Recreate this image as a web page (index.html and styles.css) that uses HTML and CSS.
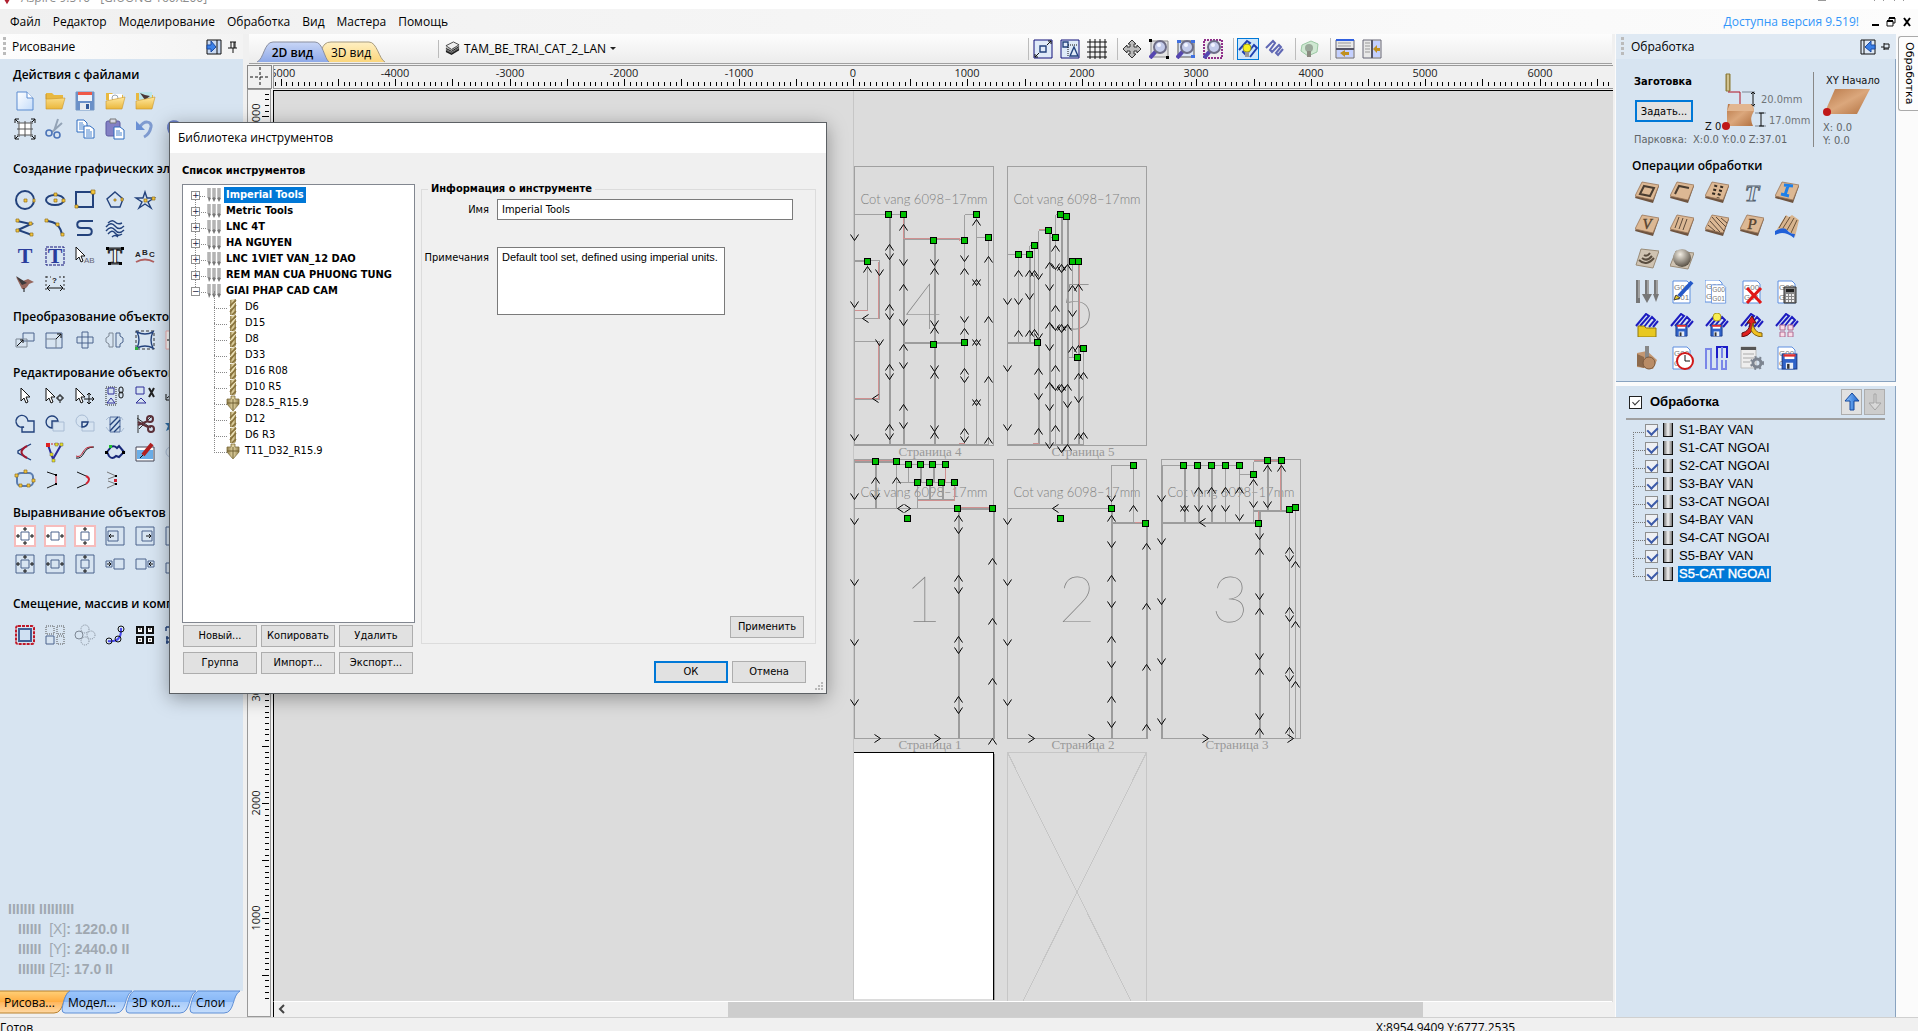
FILE: index.html
```html
<!DOCTYPE html>
<html lang="ru">
<head>
<meta charset="utf-8">
<title>Aspire 9.510 - [GIUONG 160X200]</title>
<link rel="stylesheet" href="styles.css">
</head>
<body>
<svg class="defs" aria-hidden="true">
  <defs>
    <linearGradient id="gOrange" x2="0" y2="1"><stop offset="0" stop-color="#ffd078"/><stop offset=".5" stop-color="#ffac40"/><stop offset=".5" stop-color="#ffb65c"/><stop offset="1" stop-color="#ffd9a4"/></linearGradient>
    <linearGradient id="gBlue" x2="0" y2="1"><stop offset="0" stop-color="#9cc6fb"/><stop offset=".5" stop-color="#86b6f6"/><stop offset=".5" stop-color="#a9ccfa"/><stop offset="1" stop-color="#c6defc"/></linearGradient>
    <linearGradient id="gTab2d" x2="0" y2="1"><stop offset="0" stop-color="#c9d6f6"/><stop offset="1" stop-color="#8ea9e8"/></linearGradient>
    <linearGradient id="gTab3d" x2="0" y2="1"><stop offset="0" stop-color="#fff0c4"/><stop offset="1" stop-color="#fbd67c"/></linearGradient>
    <linearGradient id="gWood" x2="1" y2="1"><stop offset="0" stop-color="#b87848"/><stop offset=".5" stop-color="#dba77c"/><stop offset="1" stop-color="#b06f3e"/></linearGradient>
    <linearGradient id="gFolder" x2="0" y2="1"><stop offset="0" stop-color="#ffe9a0"/><stop offset="1" stop-color="#eab73c"/></linearGradient>
    <linearGradient id="gPaper" x2="1" y2="1"><stop offset="0" stop-color="#fff"/><stop offset="1" stop-color="#c4dcfa"/></linearGradient>
    <linearGradient id="gArrow" x2="1"><stop offset="0" stop-color="#8ec5ff"/><stop offset="1" stop-color="#1c64cc"/></linearGradient>
    <linearGradient id="gBit" x2="1"><stop offset="0" stop-color="#8f7c48"/><stop offset=".5" stop-color="#e6d9a8"/><stop offset="1" stop-color="#8f7c48"/></linearGradient>
    <radialGradient id="gBall" cx=".4" cy=".3" r=".7"><stop offset="0" stop-color="#f3eee4"/><stop offset="1" stop-color="#5a5246"/></radialGradient>
    <symbol id="tile" viewBox="0 0 24 24"><path d="M7 2 24 5 18 22 0 17Z" fill="#6e5440"/><path d="M7 1 24 4 18 19 0 15Z" fill="#dcb894" stroke="#9a7658" stroke-width=".8"/></symbol>
    <symbol id="gcode" viewBox="0 0 24 24"><path d="M3 1H17L20 4V23H3Z" fill="#fff" stroke="#5f8fe0"/><text x="4" y="10" class="g-text">G00</text><text x="4" y="20" class="g-text">G01</text></symbol>
    <symbol id="zig" viewBox="0 0 24 24"><path d="M1 13 11 1 14 3 5 13M9 14 17 4 20 7 14 14M18 14 23 8" fill="none" stroke="#1c1cc0" stroke-width="2"/></symbol>
    <symbol id="disk" viewBox="0 0 14 14"><path d="M1 1H13V13H1Z" fill="#2f62c8" stroke="#1c3f90"/><path d="M3 1H11V5H3Z" fill="#fff"/><path d="M2 1H12V3H2Z" fill="#e03030"/><path d="M4 8H10V13H4Z" fill="#e8eef8"/><path d="M5 9H7V13H5Z" fill="#333"/></symbol>
    <symbol id="cursor" viewBox="0 0 20 20"><path d="M6 2V15L9 12 11 17 13 16 11 11H15Z" fill="#fff" stroke="#111"/></symbol>
    <symbol id="lens" viewBox="0 0 20 20"><path d="M1 19 8 11" stroke="#5546b0" stroke-width="4"/><circle cx="11" cy="8" r="6" fill="#c3cbea" stroke="#6d6d86" stroke-width="2"/><circle cx="10" cy="6" r="2" fill="#f2f5ff"/></symbol>
    <symbol id="set" viewBox="0 0 14 16"><path d="M2 1V11M7 1V11M12 1V11" stroke="#8c8c8c" stroke-width="3"/><path d="M2 1V10M7 1V10M12 1V10" stroke="#dcdcdc"/><path d="M1 11H4L2 15ZM5 11H9L7 15ZM10 11H14L12 15Z" fill="#777"/></symbol>
    <symbol id="bit" viewBox="0 0 14 16"><path d="M4 1 10 0V14L9 16H4Z" fill="url(#gBit)"/><path d="M4 7 10 1M4 13 10 6M6 16 10 12" stroke="#86703a" stroke-width="1.6"/><path d="M4 10 10 3" stroke="#f4ecc8"/></symbol>
    <symbol id="cone" viewBox="0 0 14 16"><path d="M5 1H9V4H13V9L7 16 1 9V4H5Z" fill="url(#gBit)" stroke="#80703c" stroke-width=".8"/><path d="M1 8H13M7 4V15" stroke="#6e5f30"/></symbol>
  </defs>
</svg>

<header class="titlebar"><svg viewBox="0 0 8 6" class="logo"><path d="M1 0 4 5 7 0" fill="#b02030"/></svg><span>Aspire 9.510 - [GIUONG 160X200]</span><i></i><b></b><b></b></header>
<nav class="menubar">
  <a href="#">Файл</a><a href="#">Редактор</a><a href="#">Моделирование</a><a href="#">Обработка</a><a href="#">Вид</a><a href="#">Мастера</a><a href="#">Помощь</a>
  <a href="#" class="update">Доступна версия 9.519!</a>
  <button aria-label="Свернуть"><svg viewBox="0 0 10 10"><path d="M2 8H9" stroke="#000" stroke-width="2"/></svg></button>
  <button aria-label="Восстановить"><svg viewBox="0 0 10 10"><path d="M3 3V1H9V6H7M1 4H7V9H1Z" class="k"/><path d="M3 1H9M1 4H7" stroke="#000" stroke-width="2"/></svg></button>
  <button aria-label="Закрыть"><svg viewBox="0 0 10 10"><path d="M2 1 8 9M8 1 2 9" stroke="#000" stroke-width="2"/></svg></button>
</nav>

<main class="workspace">
<aside class="left">
  <div class="panel-head"><span class="grip"></span><h2>Рисование</h2>
    <button aria-label="Переключить панели"><svg viewBox="0 0 16 16"><path d="M1 1H15V15H1Z" fill="#c9d9f2" stroke="#111"/><path d="M11 1V15" class="k"/><path d="M1 6H5V2L10 8 5 13V10H1Z" fill="#3a80e8" stroke="#1c4aa0"/></svg></button>
    <button aria-label="Закрепить"><svg viewBox="0 0 16 16"><path d="M5 3H11M6 3V9M10 3V9M9 3V9M3 9H12M8 9V14" class="k"/></svg></button></div>
  <div class="panel-body">
    <section class="tools tools--wide"><h3>Действия с файлами</h3><div class="tool-grid">
      <button aria-label="Новый"><svg viewBox="0 0 20 20"><path d="M2 1H12L18 7V19H2Z" fill="url(#gPaper)" stroke="#5b8bd0"/><path d="M12 1V7H18" fill="#fff" stroke="#5b8bd0"/></svg></button>
      <button aria-label="Открыть"><svg viewBox="0 0 20 20"><path d="M1 2H7L9 4H18V9H1Z" fill="#e8b840"/><path d="M1 18V3L1 8H3L20 7 17 18Z" fill="url(#gFolder)" stroke="#c9962a" stroke-width=".6"/></svg></button>
      <button aria-label="Сохранить"><svg viewBox="0 0 20 20"><path d="M1 1H19V19H1Z" fill="#6a90c8" stroke="#7395c4"/><path d="M3 1H17V10H3Z" fill="#edf2f8"/><path d="M3 1H17V4H3Z" fill="#ef5948"/><path d="M5 12H15V19H5Z" fill="#e6ebf0"/><path d="M11 13H14V18H11Z" fill="#345a98"/></svg></button>
      <button aria-label="Импорт векторов"><svg viewBox="0 0 20 20"><path d="M1 2H7L9 4H18V9H1Z" fill="#e8b840"/><path d="M4 3H17V10H4Z" fill="#fff"/><circle cx="10" cy="7" r="3" fill="none" stroke="#9aa6b4"/><path d="M1 18V10L20 6 17 18Z" fill="url(#gFolder)" stroke="#c9962a" stroke-width=".6"/></svg></button>
      <button aria-label="Импорт рисунка"><svg viewBox="0 0 20 20"><path d="M1 2H7L9 4H18V9H1Z" fill="#e8b840"/><path d="M4 1H17V9H4Z" fill="#bce5ea"/><path d="M5 2 10 4 15 5 10 9Z" fill="#4a3836"/><path d="M1 18V10L20 6 17 18Z" fill="url(#gFolder)" stroke="#c9962a" stroke-width=".6"/></svg></button>
      <span></span>
      <button aria-label="Размер задания"><svg viewBox="0 0 20 20"><path d="M4 4H16V16H4Z" fill="#fff"/><path d="M4 2V18M10 2V18M16 2V18M2 4H18M2 10H18M2 16H18" stroke="#555"/><path d="M0 4V0H4M16 0H20V4M20 16V20H16M4 20H0V16" stroke="#111" fill="none"/><path d="M0 0 3 3M20 0 17 3M20 20 17 17M0 20 3 17" class="k"/></svg></button>
      <button aria-label="Вырезать"><svg viewBox="0 0 20 20"><path d="M13 0 9 12M17 4 7 13" stroke="#93a3b6" stroke-width="2"/><circle cx="4" cy="14" r="3" class="cut"/><circle cx="12" cy="16" r="3" class="cut"/></svg></button>
      <button aria-label="Копировать"><svg viewBox="0 0 20 20"><path d="M2 1H9L12 4V13H2Z" fill="#fff" stroke="#2f6cc0"/><path d="M4 4H8M4 6H9M4 8H9M4 10H9" stroke="#4a86d0"/><path d="M9 7H15L19 10V19H9Z" fill="#fff" stroke="#2f6cc0"/><path d="M11 11H15M11 13H17M11 15H17M11 17H17" stroke="#4a86d0"/></svg></button>
      <button aria-label="Вставить"><svg viewBox="0 0 20 20"><rect x="1" y="2" width="14" height="15" rx="2" fill="#8380c4" stroke="#5d5aa0"/><path d="M5 0H11V4H5Z" fill="#d8d8e4" stroke="#777"/><path d="M9 8H15L19 11V20H9Z" fill="#fff" stroke="#2f6cc0"/><path d="M11 12H15M11 14H17M11 16H17" stroke="#4a86d0"/></svg></button>
      <button aria-label="Отменить"><svg viewBox="0 0 20 20"><path d="M5 8C9 1 17 2 16 8 15 13 13 16 9 18" fill="none" stroke="#7f9bd0" stroke-width="3"/><path d="M1 2V11H10Z" fill="#6a90d4"/></svg></button>
      <button aria-label="Вернуть"><svg viewBox="0 0 20 20"><path d="M16 8C12 1 3 2 4 9 5 14 7 16 11 18" fill="none" stroke="#6a7fc6" stroke-width="4"/><path d="M19 3V12H10Z" fill="#6a90d4"/></svg></button>
    </div></section>

    <section class="tools tools--wide"><h3>Создание графических элементов</h3><div class="tool-grid">
      <button aria-label="Окружность"><svg viewBox="0 0 20 20"><circle cx="10" cy="10" r="9" class="b"/><path d="M9 9H12V12H9ZM18 9H20V12H18Z" class="y"/></svg></button>
      <button aria-label="Эллипс"><svg viewBox="0 0 20 20"><ellipse cx="10" cy="10" rx="9" ry="5" class="b"/><path d="M9 9H12V12H9ZM17 9H20V12H17ZM9 3H12V6H9Z" class="y"/></svg></button>
      <button aria-label="Прямоугольник"><svg viewBox="0 0 20 20"><path d="M1 2H18V17H1Z" class="b"/><path d="M16 0H20V4H16ZM0 15H3V18H0Z" class="y"/></svg></button>
      <button aria-label="Многоугольник"><svg viewBox="0 0 20 20"><path d="M10 2 18 9 15 17H6L2 9Z" class="b b1"/><path d="M9 9H11V11H9ZM16 8H18V11H16Z" class="y"/></svg></button>
      <button aria-label="Звезда"><svg viewBox="0 0 20 20"><path d="M10 2 12 8H19L13 12 16 18 10 14 4 18 7 12 1 8H8Z" class="b b1"/><path d="M9 9H12V12H9ZM17 7H20V10H17Z" class="y"/></svg></button>
      <span></span>
      <button aria-label="Ломаная"><svg viewBox="0 0 20 20"><path d="M2 3 16 6 3 12 17 17" class="b"/><path d="M1 1H4V4H1ZM14 4H17V7H14ZM1 11H4V14H1ZM15 15H18V18H15Z" class="y"/></svg></button>
      <button aria-label="Дуга"><svg viewBox="0 0 20 20"><path d="M2 3Q15 4 17 17" class="b"/><path d="M0 1H3V4H0ZM11 5H14V8H11ZM16 15H19V18H16Z" class="y"/></svg></button>
      <button aria-label="Кривая"><svg viewBox="0 0 20 20"><path d="M18 3H6C1 3 1 10 6 10H13C18 10 18 17 13 17H2" class="b"/></svg></button>
      <button aria-label="Текстура"><svg viewBox="0 0 20 20"><circle cx="10" cy="10" r="9" fill="#dbe7f3"/><path d="M3 5Q7 1 10 4T17 5M1 9Q6 3 10 8T19 8M1 13Q6 7 10 12T19 12M3 16Q7 11 10 15T17 16M7 19Q10 16 13 19" class="b b1"/></svg></button>
      <span></span><span></span>
      <button aria-label="Текст"><svg viewBox="0 0 20 20"><text x="10" y="17" class="serif t-blue">T</text></svg></button>
      <button aria-label="Текст в рамке"><svg viewBox="0 0 20 20"><path d="M1 1H19V19H1Z" fill="none" stroke="#15157a" stroke-dasharray="3 1"/><text x="10" y="17" class="serif t-blue">T</text></svg></button>
      <button aria-label="Выбор текста"><svg viewBox="0 0 20 20"><use href="#cursor" x="-5" y="-1"/><text x="9" y="17" class="tiny">AB</text></svg></button>
      <button aria-label="Преобразовать текст"><svg viewBox="0 0 20 20"><text x="10" y="17" class="serif t-out">T</text><path d="M1 1H4V4H1ZM16 1H19V4H16ZM3 16H6V19H3ZM14 16H17V19H14Z"/><path d="M4 2H16M4 18H16" class="k"/></svg></button>
      <button aria-label="Текст по кривой"><svg viewBox="0 0 20 20"><text x="0" y="11" class="tiny t-dark">A</text><text x="7" y="9" class="tiny t-dark">B</text><text x="14" y="11" class="tiny t-dark">C</text><path d="M1 16Q10 11 19 16" fill="none" stroke="#b06060" stroke-width="2"/></svg></button>
      <span></span>
      <button aria-label="Трассировка"><svg viewBox="0 0 20 20"><path d="M1 3 8 7 13 5 19 8 14 10Q11 16 7 15Z" fill="#96675e"/><path d="M1 2 7 11 12 9Z" fill="#3d3a3c"/><path d="M9 14V18" class="k"/></svg></button>
      <button aria-label="Размеры"><svg viewBox="0 0 20 20"><path d="M1 2V18M19 2V18M1 3H6M14 3H19" stroke="#333" stroke-dasharray="2 2"/><path d="M2 14H18M5 11 2 14 5 17M15 11 18 14 15 17" class="k"/><text x="7" y="9" class="tiny t-dark">?</text></svg></button>
    </div></section>

    <section class="tools"><h3>Преобразование объектов</h3><div class="tool-grid">
      <button aria-label="Переместить"><svg viewBox="0 0 20 20"><path d="M8 3H19V11H8Z" class="s"/><path d="M1 9H12V17H1Z" class="g"/><path d="M2 16 8 10M5 10H8V13" class="k"/></svg></button>
      <button aria-label="Масштаб"><svg viewBox="0 0 20 20"><path d="M1 3H17V18H1Z" class="s"/><path d="M1 9H11V18" class="g"/><path d="M11 9 16 4M12 4H16V8" class="k"/></svg></button>
      <button aria-label="Повернуть"><svg viewBox="0 0 20 20"><path d="M7 2H13V18H7Z" class="s"/><path d="M2 7H18V13H2Z" class="s"/></svg></button>
      <button aria-label="Отразить"><svg viewBox="0 0 20 20"><path d="M8 3H4V6L1 8V12L4 14V17H8Z" class="g"/><path d="M11 3H15V6L18 8V12L15 14V17H11Z" class="s"/></svg></button>
      <button aria-label="Исказить"><svg viewBox="0 0 20 20"><path d="M1 1H19V19H1Z" fill="none" stroke="#333" stroke-dasharray="3 2"/><path d="M2 2Q10 6 18 2 14 10 18 18 10 14 2 18 6 10 2 2Z" class="b b1"/><path d="M0 17H3V20H0Z" fill="#30b040"/></svg></button>
      <button aria-label="Выровнять"><svg viewBox="0 0 20 20"><path d="M1 1H19V19H1Z" fill="#fff" stroke="#f0b0b0"/><path d="M2 10H8M5 7V13" class="k"/></svg></button>
    </div></section>

    <section class="tools"><h3>Редактирование объектов</h3><div class="tool-grid">
      <button aria-label="Выбор"><svg viewBox="0 0 20 20"><use href="#cursor"/></svg></button>
      <button aria-label="Узлы"><svg viewBox="0 0 20 20"><use href="#cursor" x="-5"/><path d="M13 10H17V14H13ZM15 8V10M15 14V17M11 12H13M17 12H19" class="k"/></svg></button>
      <button aria-label="Трансформация"><svg viewBox="0 0 20 20"><use href="#cursor" x="-5"/><path d="M14 7V18M9 13H19M12 9 14 7 16 9M12 16 14 18 16 16M17 11 19 13 17 15" class="k"/></svg></button>
      <button aria-label="Группировать"><svg viewBox="0 0 20 20"><path d="M1 1H11V19H1Z" fill="none" stroke="#222" stroke-dasharray="1 1"/><path d="M3 2H9V8H3ZM6 12 10 17H2Z" class="v"/><rect x="14" y="1" width="4" height="6" rx="2" class="k"/><rect x="14" y="6" width="4" height="6" rx="2" class="k"/></svg></button>
      <button aria-label="Разгруппировать"><svg viewBox="0 0 20 20"><path d="M1 1H9V8H1ZM6 12 11 17H1Z" class="v"/><path d="M14 2 19 11M19 2 14 11" stroke="#222" stroke-width="2"/></svg></button>
      <button aria-label="Измерить"><svg viewBox="0 0 20 20"><path d="M2 12 12 4M1 8V14H7" class="k"/></svg></button>
      <button aria-label="Сварить"><svg viewBox="0 0 20 20"><path d="M9 13A6 6 0 1 1 13 7H19V18H7V13Z" class="b b1"/></svg></button>
      <button aria-label="Вычесть"><svg viewBox="0 0 20 20"><path d="M8 8H19V17H8Z" class="f"/><path d="M7 14A6 6 0 1 1 13 7H7Z" class="b b1"/></svg></button>
      <button aria-label="Пересечь"><svg viewBox="0 0 20 20"><path d="M7 8H19V17H7Z" class="f"/><circle cx="7" cy="7" r="6" class="f"/><path d="M7 8H13Q12 13 7 13Z" class="b b1"/></svg></button>
      <button aria-label="Штриховка"><svg viewBox="0 0 20 20"><path d="M5 3H15V18H5Z" fill="#cbdced" stroke="#5873a0"/><path d="M5 11 13 3M5 17 15 6M9 18 15 12" class="b b1"/><path d="M1 6 4 3M16 18 19 14M1 13 4 17M16 3 18 6" class="f"/></svg></button>
      <button aria-label="Обрезать"><svg viewBox="0 0 20 20"><path d="M3 1V19M2 4 16 14M16 3 4 15" stroke="#333"/><circle cx="15" cy="5" r="3" class="br"/><circle cx="16" cy="15" r="3" class="br"/><path d="M13 7 3 11M13 13 3 8" class="br"/></svg></button>
      <button aria-label="Звёздочка"><svg viewBox="0 0 20 20"><path d="M6 7 8 11H12L8 14 10 18 5 15 1 17 3 12 0 9H4Z" fill="#2f6fa8"/></svg></button>
      <button aria-label="Скругление"><svg viewBox="0 0 20 20"><path d="M16 2 3 9V11L16 18" class="b b1"/><path d="M12 4Q1 10 12 16" fill="none" stroke="#a01830" stroke-width="2"/></svg></button>
      <button aria-label="Подгонка"><svg viewBox="0 0 20 20"><path d="M3 2H15" stroke="#d02020" stroke-dasharray="2 1"/><path d="M3 3 8 17 16 3" class="v v2"/><path d="M1 1H5V5H1Z" fill="#e02020"/><path d="M10 1H13V4H10ZM15 1H18V4H15ZM5 11H8V14H5ZM7 17H10V20H7Z" fill="#e8e020" stroke="#665" stroke-width=".5"/></svg></button>
      <button aria-label="Сгладить"><svg viewBox="0 0 20 20"><path d="M1 16Q6 17 9 11T19 5" class="k"/><path d="M1 14Q5 16 8 10T18 5" stroke="#c02030" fill="none"/></svg></button>
      <button aria-label="Редактор контура"><svg viewBox="0 0 20 20"><path d="M2 10 6 5Q9 3 12 6L14 4 19 10 14 15 11 14Q7 18 4 14Z" fill="none" stroke="#182878" stroke-width="2"/><path d="M4 3H7V6H4Z" fill="#20c030"/><path d="M0 9H3V12H0ZM17 9H20V12H17Z"/></svg></button>
      <button aria-label="Растр"><svg viewBox="0 0 20 20"><path d="M1 5H19V19H1Z" fill="#fff" stroke="#445"/><path d="M2 8H18V17H2Z" fill="#6aaee8"/><path d="M8 13 17 2" stroke="#b02020" stroke-width="4"/><path d="M5 16 8 13" class="k"/></svg></button>
      <button aria-label="Окружности"><svg viewBox="0 0 20 20"><circle cx="6" cy="10" r="5" class="f"/></svg></button>
      <button aria-label="Подгонка кривых"><svg viewBox="0 0 20 20"><rect x="2" y="3" width="16" height="13" rx="4" fill="#cfe0f0" stroke="#5b7db0" stroke-width="2"/><path d="M9 0H12V3H9ZM0 4H3V7H0ZM17 9H20V12H17ZM4 14H7V17H4ZM12 14H15V17H12Z" class="y"/></svg></button>
      <button aria-label="Соединить линией"><svg viewBox="0 0 20 20"><path d="M2 2 11 5M11 14 2 18" class="k"/><path d="M11 5V14" stroke="#d02030"/><path d="M10 4H12V6H10ZM10 13H12V15H10Z"/></svg></button>
      <button aria-label="Соединить кривой"><svg viewBox="0 0 20 20"><path d="M2 2 11 6M11 14 2 18" class="k"/><path d="M11 6Q17 9 11 14" fill="none" stroke="#d02030" stroke-width="2"/></svg></button>
      <button aria-label="Соединить точкой"><svg viewBox="0 0 20 20"><path d="M2 2 11 6 3 9M3 11 11 14 2 18" fill="none" stroke="#777"/><path d="M10 5H12V7H10ZM10 13H12V15H10Z"/><path d="M9 9H12V12H9Z" fill="#d02030"/></svg></button>
    </div></section>

    <section class="tools"><h3>Выравнивание объектов</h3><div class="tool-grid">
      <button aria-label="По центру материала"><svg viewBox="0 0 20 20"><path d="M0 0H20V20H0Z" class="p"/><path d="M6 6H14V14H6Z" class="s"/><path d="M10 1V5M10 15V19M1 10H5M15 10H19M8 3H12M8 17H12M3 8V12M17 8V12" class="k"/></svg></button>
      <button aria-label="По горизонтали"><svg viewBox="0 0 20 20"><path d="M0 0H20V20H0Z" class="p"/><path d="M6 6H14V14H6Z" class="s"/><path d="M1 10H5M15 10H19M3 8V12M17 8V12" class="k"/></svg></button>
      <button aria-label="По вертикали"><svg viewBox="0 0 20 20"><path d="M0 0H20V20H0Z" class="p"/><path d="M6 6H14V14H6Z" class="s"/><path d="M10 1V5M10 15V19M8 3H12M8 17H12" class="k"/></svg></button>
      <button aria-label="Влево"><svg viewBox="0 0 20 20"><path d="M1 1H19V19H1Z" class="s"/><path d="M3 5H13V15H3Z" class="s"/><path d="M4 10H9M6 8 4 10 6 12" class="k"/></svg></button>
      <button aria-label="Вправо"><svg viewBox="0 0 20 20"><path d="M1 1H19V19H1Z" class="s"/><path d="M7 5H17V15H7Z" class="s"/><path d="M11 10H16M14 8 16 10 14 12" class="k"/></svg></button>
      <button aria-label="Вверх"><svg viewBox="0 0 20 20"><path d="M1 1H19V19H1Z" class="s"/><path d="M5 5H15V15H5Z" class="s"/></svg></button>
      <button aria-label="По центру выбора"><svg viewBox="0 0 20 20"><path d="M1 1H19V19H1Z" class="s"/><path d="M6 6H14V14H6Z" class="s"/><path d="M10 1V5M10 15V19M1 10H5M15 10H19M8 3H12M8 17H12M3 8V12M17 8V12" class="k"/></svg></button>
      <button aria-label="По горизонтали выбора"><svg viewBox="0 0 20 20"><path d="M1 1H19V19H1Z" class="s"/><path d="M6 6H14V14H6Z" class="s"/><path d="M1 10H5M15 10H19M3 8V12M17 8V12" class="k"/></svg></button>
      <button aria-label="По вертикали выбора"><svg viewBox="0 0 20 20"><path d="M1 1H19V19H1Z" class="s"/><path d="M6 6H14V14H6Z" class="s"/><path d="M10 1V5M10 15V19M8 3H12M8 17H12" class="k"/></svg></button>
      <button aria-label="Снаружи слева"><svg viewBox="0 0 20 20"><path d="M9 5H19V15H9ZM1 7H7V13H1Z" class="s"/><path d="M2 10H6M4 8 6 10 4 12" class="k"/></svg></button>
      <button aria-label="Снаружи справа"><svg viewBox="0 0 20 20"><path d="M1 5H11V15H1ZM13 7H19V13H13Z" class="s"/><path d="M14 10H18M16 8 14 10 16 12" class="k"/></svg></button>
      <button aria-label="Снаружи снизу"><svg viewBox="0 0 20 20"><path d="M1 9H15V19H1Z" class="s"/></svg></button>
    </div></section>

    <section class="tools tools--wide"><h3>Смещение, массив и компоновка</h3><div class="tool-grid">
      <button aria-label="Смещение"><svg viewBox="0 0 20 20"><rect x="1" y="1" width="18" height="18" rx="2" fill="none" stroke="#c01828" stroke-width="2" stroke-dasharray="3 1"/><path d="M4 4H16V16H4Z" fill="#cfe0f2" stroke="#3f5f94" stroke-width="2"/></svg></button>
      <button aria-label="Массив"><svg viewBox="0 0 20 20"><path d="M1 1H9V9H1ZM12 1H19V9H12ZM12 11H19V19H12Z" fill="none" stroke="#555" stroke-dasharray="1 1"/><path d="M1 11H9V19H1Z" class="s"/></svg></button>
      <button aria-label="Круговой массив"><svg viewBox="0 0 20 20"><circle cx="10" cy="4" r="4" class="g gd"/><circle cx="4" cy="10" r="4" class="g"/><circle cx="16" cy="10" r="4" class="g gd"/><circle cx="10" cy="16" r="4" class="g gd"/></svg></button>
      <button aria-label="Копии вдоль кривой"><svg viewBox="0 0 20 20"><path d="M3 16Q17 18 16 3" fill="none" stroke="#4a4af0" stroke-width="2"/><circle cx="4" cy="16" r="3" class="k"/><circle cx="13" cy="14" r="3" class="k"/><circle cx="16" cy="4" r="3" class="k"/></svg></button>
      <button aria-label="Раскладка"><svg viewBox="0 0 20 20"><path d="M2 2H8V8H2ZM12 2H18V8H12ZM2 12H8V18H2ZM12 12H18V18H12Z" fill="#fff" stroke="#111" stroke-width="2"/><path d="M4 4H6M14 4H16M4 15H6M14 15H16" class="k"/></svg></button>
      <button aria-label="Листы"><svg viewBox="0 0 20 20"><path d="M1 2H9M1 2V6M4 9H9M1 13H8M1 17H8M2 11V19" class="b b1"/></svg></button>
    </div></section>

    <div class="job-size"><p>IIIIIII IIIIIIIII</p><p>IIIIII &nbsp;<i>[X]</i>: 1220.0 II</p><p>IIIIII &nbsp;<i>[Y]</i>: 2440.0 II</p><p>IIIIIII <i>[Z]</i>: 17.0 II</p></div>
  </div>
  <nav class="bottom-tabs">
    <button><svg><path d="M-9 0H70C62 4 65 22 54 22H-9Z" fill="url(#gOrange)" stroke="#b8802c"/></svg><span>Рисова...</span></button>
    <button><svg><path d="M6 0H68C60 4 63 22 52 22H1Q-2 22-2 18C0 8 2 2 6 0Z" fill="url(#gBlue)" stroke="#5f8fd6"/></svg><span>Модел...</span></button>
    <button><svg><path d="M6 0H68C60 4 63 22 52 22H1Q-2 22-2 18C0 8 2 2 6 0Z" fill="url(#gBlue)" stroke="#5f8fd6"/></svg><span>3D кол...</span></button>
    <button><svg><path d="M6 0H48C40 4 43 22 32 22H1Q-2 22-2 18C0 8 2 2 6 0Z" fill="url(#gBlue)" stroke="#5f8fd6"/></svg><span>Слои</span></button>
  </nav>
</aside>

<section class="center">
  <div class="toolbar">
    <button class="view-tab view-tab--on"><svg><path d="M0 20C7 17 7 0 16 0H58C66 0 67 16 72 20" fill="url(#gTab2d)" stroke="#8a8fa0"/></svg><span>2D вид</span></button>
    <button class="view-tab"><svg><path d="M2 20C-2 14-6 8 0 2Q2 0 6 0H44C52 0 54 17 60 20" fill="url(#gTab3d)" stroke="#a89c80"/></svg><span>3D вид</span></button>
    <button class="sheet-pick"><svg viewBox="0 0 16 16"><path d="M1 8V12L7 15 15 10V6" fill="#555"/><path d="M1 6 8 9 15 4V7L7 12 1 9Z" fill="#bbb"/><path d="M1 5 9 1 15 4 7 9Z" fill="#eee" stroke="#444"/><path d="M1 8 7 11 15 6M1 11 7 14 15 9" class="k"/></svg>TAM_BE_TRAI_CAT_2_LAN<i class="caret"></i></button>
    <div class="tb-group">
      <button aria-label="Привязка"><svg viewBox="0 0 20 20"><path d="M1 1H19V19H1Z" fill="#dfeaf8" stroke="#10107a"/><path d="M7 7H13V13H7Z" class="b b1"/><path d="M2 18 6 14M14 6 18 2M15 2H18V5M2 15V18H5" class="k"/></svg></button>
      <button aria-label="Привязка к объектам"><svg viewBox="0 0 20 20"><path d="M1 1H19V19H1Z" fill="#dfeaf8" stroke="#10107a"/><path d="M3 3H8V8H3ZM14 8 18 17H10Z" class="b b1"/><path d="M8 8V18M8 6H17" stroke="#111" stroke-dasharray="1 1"/></svg></button>
      <button aria-label="Сетка"><svg viewBox="0 0 20 20"><path d="M3 0V20M8 0V20M13 0V20M18 0V20M0 3H20M0 8H20M0 13H20M0 18H20" class="k"/></svg></button>
    </div>
    <div class="tb-group">
      <button aria-label="Панорама"><svg viewBox="0 0 20 20"><path d="M10 1 14 5H12V8H15V6L19 10 15 14V12H12V15H14L10 19 6 15H8V12H5V14L1 10 5 6V8H8V5H6Z" fill="#bbb" stroke="#333"/></svg></button>
      <button aria-label="Масштаб"><svg viewBox="0 0 20 20"><path d="M2 2H19V18H2Z" fill="#e4e4e4" stroke="#888"/><use href="#lens"/><path d="M0 0H3V3H0ZM17 17H20V20H17Z"/></svg></button>
      <button aria-label="Всё"><svg viewBox="0 0 20 20"><path d="M2 2H18V18H2Z" fill="#dbe4f4" stroke="#555"/><use href="#lens"/><path d="M1 1H5V4H1ZM15 1H19V4H15ZM15 16H19V19H15Z" fill="#4070e0"/></svg></button>
      <button aria-label="Выбранное"><svg viewBox="0 0 20 20"><path d="M1 1H19V19H1Z" fill="#eee" stroke="#90308a" stroke-width="2" stroke-dasharray="2 1"/><use href="#lens"/></svg></button>
    </div>
    <div class="tb-group">
      <button class="on" aria-label="Показать траектории"><svg viewBox="0 0 20 20"><path d="M1 11 9 2 12 4 5 13 8 16 16 6 19 9 12 18" fill="none" stroke="#2040b0" stroke-width="2"/><circle cx="9" cy="9" r="4" fill="#f8f020" stroke="#a0a020"/><path d="M7 13H11V18H7Z" fill="#999"/></svg></button>
      <button aria-label="Траектории"><svg viewBox="0 0 20 20"><path d="M1 9 8 2 10 4 5 11 7 13 14 6 16 8 11 14 13 16 18 10" fill="none" stroke="#6068b4" stroke-width="2"/></svg></button>
    </div>
    <div class="tb-group">
      <button aria-label="Предпросмотр"><svg viewBox="0 0 20 20"><path d="M2 6 11 2 18 5 17 13 8 17 1 12Z" fill="#cfe8d2" stroke="#9cc8a4"/><circle cx="9" cy="9" r="4" fill="#9aa89a"/><path d="M7 12H11V18H7Z" fill="#8a8a80"/></svg></button>
    </div>
    <div class="tb-group">
      <button aria-label="Разделить горизонтально"><svg viewBox="0 0 20 20"><path d="M1 1H19V19H1Z" fill="#e8e8e8" stroke="#667"/><path d="M1 1H19" stroke="#3060e0" stroke-width="2"/><path d="M1 10H19" stroke="#556" stroke-width="2"/><path d="M2 11H18V18H2Z" fill="#c4d0ff"/><path d="M5 14 10 11V13H14V16H10V18Z" fill="#c09020"/><path d="M3 4H16M3 7H16" stroke="#999"/></svg></button>
      <button aria-label="Разделить вертикально"><svg viewBox="0 0 20 20"><path d="M1 1H19V19H1Z" fill="#e8e8e8" stroke="#667"/><path d="M10 1V19" stroke="#556" stroke-width="2"/><path d="M11 2H18V18H11Z" fill="#c4d0ff"/><path d="M11 10 15 6V9H18V12H15V14Z" fill="#c09020"/><path d="M3 4H8M3 7H8M3 10H8M3 13H8" stroke="#999"/></svg></button>
    </div>
  </div>
  <div class="ruler-corner"><svg viewBox="0 0 20 20"><path d="M10 0V20M0 10H20" stroke="#111" stroke-dasharray="3 2"/></svg></div>
  <svg class="ruler-x" id="rulerX"></svg>
  <svg class="ruler-y" id="rulerY"></svg>
  <svg class="canvas" id="canvas" role="img" aria-label="Траектории на листах"></svg>
  <div class="scroll-x"><button aria-label="Прокрутить влево"><svg viewBox="0 0 10 10"><path d="M7 1 3 5 7 9" fill="none" stroke="#444" stroke-width="2"/></svg></button><span class="thumb"></span></div>
</section>

<aside class="right">
  <div class="right-main">
    <div class="panel-head"><span class="grip"></span><h2>Обработка</h2>
      <button aria-label="Переключить панели"><svg viewBox="0 0 16 16"><path d="M1 1H15V15H1Z" fill="#dfe9f5" stroke="#111"/><path d="M4 1V15" class="k"/><path d="M15 6H11V2L5 8 11 13V10H15Z" fill="#3a80e8" stroke="#1c4aa0"/></svg></button>
      <button aria-label="Закрепить"><svg viewBox="0 0 16 16"><path d="M2 8H5M5 4V11M5 5H10V9H5M5 10H10" class="k"/></svg></button></div>
    <div class="setup-panel">
      <div class="stock">
        <div class="material">
          <h3>Заготовка</h3>
          <button class="set-btn">Задать...</button>
          <svg class="stock-pic"><path d="M22 2H26V19H22Z" fill="url(#gBit)" stroke="#8c7a34"/><path d="M24 20H36V34" fill="none" stroke="#b01020"/><path d="M38 20H51M38 34H51M51 54H62M51 41H62" class="g"/><path d="M49 20V34M47 22 49 20 51 22M47 32 49 34 51 32M57 41V54M55 41H60M55 54H60" class="k"/><path d="M24 32H46Q50 33 50 39L48 43Q46 48 49 54H23V39Z" fill="url(#gWood)"/><path d="M26 32H47L50 39H23Z" fill="#e2b690"/><circle cx="22" cy="54" r="4" fill="#c01818"/><text x="1" y="58" class="t-z">Z 0</text><text x="57" y="31">20.0mm</text><text x="65" y="52">17.0mm</text></svg>
          <p><span>Парковка:</span><span>X:0.0 Y:0.0 Z:37.01</span></p>
        </div>
        <div class="origin"><h4>XY Начало</h4><svg viewBox="0 0 48 28"><path d="M12 1H47L34 26H1Z" fill="url(#gWood)"/><circle cx="4" cy="24" r="4" fill="#c01818"/></svg><p>X: 0.0</p><p>Y: 0.0</p></div>
      </div>
      <h3 class="ops-title">Операции обработки</h3>
      <div class="ops">
        <button aria-label="Контур"><svg viewBox="0 0 24 24"><use href="#tile"/><path d="M9 5 19 7 15 15 5 13Z" fill="none" stroke="#493c30" stroke-width="2"/></svg></button>
        <button aria-label="Карман"><svg viewBox="0 0 24 24"><use href="#tile"/><path d="M5 13 9 5 19 7" fill="none" stroke="#493c30" stroke-width="2"/></svg></button>
        <button aria-label="Сверление"><svg viewBox="0 0 24 24"><use href="#tile"/><path d="M11 4 8 15M17 5 13 17" stroke="#33291f" stroke-width="3" stroke-dasharray="2 2"/></svg></button>
        <button aria-label="Надпись"><svg viewBox="0 0 24 24"><text x="12" y="20" class="serif t-wire">T</text></svg></button>
        <button aria-label="Инкрустация"><svg viewBox="0 0 24 24"><use href="#tile"/><path d="M9 4 18 5M6 13 14 15M13 5 10 14" stroke="#1f80e8" stroke-width="3"/></svg></button>
        <button aria-label="V-гравировка"><svg viewBox="0 0 24 24"><use href="#tile"/><text x="12" y="15" class="serif t-cut">V</text></svg></button>
        <button aria-label="Канавки"><svg viewBox="0 0 24 24"><use href="#tile"/><path d="M9 3 5 14M13 4 9 15M17 5 13 16" stroke="#5c4a3a"/></svg></button>
        <button aria-label="Текстура"><svg viewBox="0 0 24 24"><use href="#tile"/><path d="M7 3 19 17M5 7 15 18M3 11 10 17M11 3 21 13M16 4 22 9" stroke="#5c4a3a"/></svg></button>
        <button aria-label="Призма"><svg viewBox="0 0 24 24"><use href="#tile"/><text x="12" y="15" class="serif t-cut">P</text></svg></button>
        <button aria-label="Молдинг"><svg viewBox="0 0 24 24"><path d="M1 17 11 1 14 3 17 1 24 6 20 23Q12 12 1 17Z" fill="#d8b48e"/><path d="M4 14 11 2M8 14 15 3M12 16 19 4M16 19 22 6" stroke="#6a5238"/><path d="M0 17Q9 12 12 16T20 20L19 24Q9 16 0 21Z" fill="#2060d8"/></svg></button>
        <button aria-label="Черновая 3D"><svg viewBox="0 0 24 24"><path d="M6 2 24 4 18 21 1 18Z" fill="#cfc3b2" stroke="#9a8c78"/><path d="M4 13Q11 20 19 11M7 11Q12 15 17 9M9 8Q12 10 15 6" fill="none" stroke="#5a4e40" stroke-width="2"/></svg></button>
        <button aria-label="Чистовая 3D"><svg viewBox="0 0 24 24"><path d="M6 4 24 6 18 22 0 19Z" fill="#cfc3b2" stroke="#9a8c78"/><circle cx="12" cy="11" r="9" fill="url(#gBall)"/></svg></button>
        <span></span><span></span><span></span>
        <button aria-label="База инструментов"><svg viewBox="0 0 24 24"><path d="M3 0V18M12 0V14M21 0V14" stroke="#777" stroke-width="4"/><path d="M4 0V18M13 0V14M22 0V14" stroke="#ccc"/><path d="M1 18H5V23H1ZM7 14H17L12 23ZM18 14H24L21 22Z" fill="#777"/></svg></button>
        <button aria-label="Изменить траекторию"><svg viewBox="0 0 24 24"><use href="#gcode"/><path d="M9 16 22 2" stroke="#2458c8" stroke-width="4"/><path d="M4 20 6 15 10 18Z" fill="#f0d020" stroke="#444"/></svg></button>
        <button aria-label="Дублировать"><svg viewBox="0 0 24 24"><use href="#gcode" x="-3" y="-1"/><use href="#gcode" x="4" y="4" width="20" height="20"/></svg></button>
        <button aria-label="Удалить"><svg viewBox="0 0 24 24"><use href="#gcode"/><path d="M7 8 21 23M21 8 7 23" stroke="#e01818" stroke-width="3"/></svg></button>
        <button aria-label="Расчёт времени"><svg viewBox="0 0 24 24"><use href="#gcode"/><path d="M9 7H21V23H9Z" fill="#888" stroke="#333"/><path d="M11 9H19V12H11Z" fill="#222"/><path d="M11 15H20M11 18H20M11 21H20" stroke="#eee" stroke-dasharray="2 1" stroke-width="2"/></svg></button>
        <button aria-label="Загрузить шаблон"><svg viewBox="0 0 24 24"><use href="#zig"/><path d="M3 13H9L11 15H21V24H3Z" fill="#e8c820" stroke="#907810"/></svg></button>
        <button aria-label="Сохранить шаблон"><svg viewBox="0 0 24 24"><use href="#zig"/><use href="#disk" x="5" y="11" width="13" height="13"/></svg></button>
        <button aria-label="Сохранить видимые"><svg viewBox="0 0 24 24"><use href="#zig"/><circle cx="12" cy="4" r="4" fill="#f8ee50" stroke="#b0a020"/><use href="#disk" x="5" y="11" width="13" height="13"/></svg></button>
        <button aria-label="Объединить"><svg viewBox="0 0 24 24"><use href="#zig"/><path d="M12 3 7 10H10Q10 18 2 20V24Q14 22 13 10H16Z" fill="#e02020" stroke="#601010"/><path d="M13 10Q14 20 22 20V24Q13 23 11 17Z" fill="#f0c020" stroke="#806010"/></svg></button>
        <button aria-label="Массив траекторий"><svg viewBox="0 0 24 24"><use href="#zig"/><path d="M5 12H10V17H5ZM13 12H18V17H13ZM5 19H10V24H5ZM13 19H18V24H13Z" fill="#f8dce8" stroke="#b06890"/></svg></button>
        <button aria-label="Просмотр траекторий"><svg viewBox="0 0 24 24"><path d="M2 7 12 5 22 14 18 23 2 21Z" fill="#c39772"/><path d="M2 8 9 11V22L2 20Z" fill="#8d6a4c"/><path d="M10 0H14V13H10Z" fill="#888"/><circle cx="14" cy="17" r="6" fill="#b98c66" stroke="#7c5a3e"/></svg></button>
        <button aria-label="Время обработки"><svg viewBox="0 0 24 24"><use href="#gcode"/><circle cx="15" cy="15" r="8" fill="#fff" stroke="#d01818" stroke-width="2"/><path d="M15 9V15H20" class="k"/></svg></button>
        <button aria-label="Порядок"><svg viewBox="0 0 24 24"><path d="M1 23V3H6V23H12V3" fill="none" stroke="#7a86e8" stroke-width="2"/><path d="M12 12V1H22V12" fill="none" stroke="#1c1cc8" stroke-width="2"/><path d="M17 1V12M17 14V23H21V14" fill="none" stroke="#7a86e8" stroke-width="2"/></svg></button>
        <button aria-label="Настройки"><svg viewBox="0 0 24 24"><path d="M1 1H16V22H1Z" fill="#eee" stroke="#bbb"/><path d="M1 1H16V4H1Z" fill="#555"/><path d="M3 8H14M3 12H14M3 16H10" stroke="#ccc" stroke-width="2"/><circle cx="17" cy="17" r="4" fill="none" stroke="#7c8490" stroke-width="3"/><circle cx="17" cy="17" r="6" fill="none" stroke="#7c8490" stroke-width="2" stroke-dasharray="2 3"/></svg></button>
        <button aria-label="Сохранить УП"><svg viewBox="0 0 24 24"><use href="#gcode"/><use href="#disk" x="6" y="7" width="17" height="17"/></svg></button>
      </div>
    </div>
    <div class="list-panel">
      <div class="list-head"><label><input type="checkbox" class="check-all" checked>Обработка</label>
        <button aria-label="Вверх"><svg viewBox="0 0 16 20"><path d="M8 1 15 9H10V18H6V9H1Z" fill="url(#gArrow)" stroke="#16489c"/></svg></button>
        <button aria-label="Вниз" disabled><svg viewBox="0 0 16 20"><path d="M8 18 14 11H9V2H7V11H2Z" fill="#d8d8d8" stroke="#a4a4a4"/></svg></button></div>
      <ul class="paths">
        <li><label><input type="checkbox" checked><i></i><span>S1-BAY VAN</span></label></li>
        <li><label><input type="checkbox" checked><i></i><span>S1-CAT NGOAI</span></label></li>
        <li><label><input type="checkbox" checked><i></i><span>S2-CAT NGOAI</span></label></li>
        <li><label><input type="checkbox" checked><i></i><span>S3-BAY VAN</span></label></li>
        <li><label><input type="checkbox" checked><i></i><span>S3-CAT NGOAI</span></label></li>
        <li><label><input type="checkbox" checked><i></i><span>S4-BAY VAN</span></label></li>
        <li><label><input type="checkbox" checked><i></i><span>S4-CAT NGOAI</span></label></li>
        <li><label><input type="checkbox" checked><i></i><span>S5-BAY VAN</span></label></li>
        <li><label><input type="checkbox" checked><i></i><span class="sel">S5-CAT NGOAI</span></label></li>
      </ul>
    </div>
  </div>
  <button class="side-tab">Обработка</button>
</aside>
</main>
<footer class="status"><span>Готов</span><span class="coords">X:8954.9409 Y:6777.2535</span></footer>

<div class="dialog" role="dialog" aria-labelledby="dlgTitle">
  <h1 id="dlgTitle">Библиотека инструментов</h1>
  <div class="dlg-body">
    <div class="dlg-cols">
      <div class="dlg-left">
        <h2>Список инструментов</h2>
        <ul class="tree">
          <li><i class="exp">+</i><svg><use href="#set"/></svg><b class="sel">Imperial Tools</b></li>
          <li><i class="exp">+</i><svg><use href="#set"/></svg><b>Metric Tools</b></li>
          <li><i class="exp">+</i><svg><use href="#set"/></svg><b>LNC 4T</b></li>
          <li><i class="exp">+</i><svg><use href="#set"/></svg><b>HA NGUYEN</b></li>
          <li><i class="exp">+</i><svg><use href="#set"/></svg><b>LNC 1VIET VAN_12 DAO</b></li>
          <li><i class="exp">+</i><svg><use href="#set"/></svg><b>REM MAN CUA PHUONG TUNG</b></li>
          <li><i class="exp">−</i><svg><use href="#set"/></svg><b>GIAI PHAP CAD CAM</b></li>
          <li class="sub"><svg><use href="#bit"/></svg>D6</li>
          <li class="sub"><svg><use href="#bit"/></svg>D15</li>
          <li class="sub"><svg><use href="#bit"/></svg>D8</li>
          <li class="sub"><svg><use href="#bit"/></svg>D33</li>
          <li class="sub"><svg><use href="#bit"/></svg>D16 R08</li>
          <li class="sub"><svg><use href="#bit"/></svg>D10 R5</li>
          <li class="sub"><svg><use href="#cone"/></svg>D28.5_R15.9</li>
          <li class="sub"><svg><use href="#bit"/></svg>D12</li>
          <li class="sub"><svg><use href="#bit"/></svg>D6 R3</li>
          <li class="sub"><svg><use href="#cone"/></svg>T11_D32_R15.9</li>
        </ul>
        <div class="dlg-btns"><button>Новый...</button><button>Копировать</button><button>Удалить</button><button>Группа</button><button>Импорт...</button><button>Экспорт...</button></div>
      </div>
      <fieldset><legend>Информация о инструменте</legend>
        <label for="toolName">Имя</label><input id="toolName" type="text" value="Imperial Tools">
        <label for="toolNotes">Примечания</label><textarea id="toolNotes">Default tool set, defined using imperial units.</textarea>
        <button class="apply">Применить</button>
      </fieldset>
    </div>
    <div class="dlg-foot"><button class="default">ОК</button><button>Отмена</button></div>
  </div>
  <svg class="resize" viewBox="0 0 8 8"><path d="M6 0H8V2H6ZM3 3H5V5H3ZM6 3H8V5H6ZM0 6H2V8H0ZM3 6H5V8H3ZM6 6H8V8H6Z" fill="#b8b8b8"/></svg>
</div>
<script src="app.js"></script>
</body>
</html>
```
FILE: styles.css
```css
* { box-sizing: border-box; }
body { margin: 0; height: 100vh; display: flex; flex-direction: column; overflow: hidden; background: #f0f0f0; color: #000; font: 12px/16px "Open Sans", "Noto Sans", sans-serif; }
h1, h2, h3, h4, p, ul { margin: 0; padding: 0; font: inherit; list-style: none; }
button { margin: 0; padding: 0; border: 0; background: none; font: inherit; color: inherit; }
a { color: inherit; text-decoration: none; }
.defs { position: absolute; width: 0; height: 0; }

/* drawing classes shared by the icons */
.k { stroke: #111; fill: none; }
.b { stroke: #23427c; fill: none; stroke-width: 2; }
.b1 { stroke-width: 1.4; }
.cut { stroke: #4c74b8; fill: none; stroke-width: 1.6; }
.y { fill: #f4c63c; stroke: #94701c; stroke-width: .7; }
.s { stroke: #4a628c; fill: none; }
.g { stroke: #7d8794; fill: none; }
.gd { stroke-dasharray: 1 1; }
.v { stroke: #2c2c98; fill: none; }
.v2 { stroke-width: 2; }
.f { stroke: #a9bcd4; fill: none; }
.br { stroke: #5c3038; fill: none; stroke-width: 2; }
.p { stroke: #f6bcbc; fill: #fff; stroke-width: 2; }
.serif { font-family: "Liberation Serif", serif; font-weight: bold; text-anchor: middle; }
.t-blue { font-size: 22px; fill: #2a3c9c; }
.t-out { font-size: 21px; fill: #fff; stroke: #222; }
.t-wire { font-size: 24px; font-style: italic; fill: #d7e4f1; stroke: #54606c; }
.t-cut { font-size: 15px; font-style: italic; font-weight: normal; fill: #55432f; stroke: #55432f; stroke-width: .4; }
.tiny { font: 8px "Liberation Sans", sans-serif; fill: #667; }
.t-dark { font-weight: bold; fill: #222; }
.g-text { font: 8px "Liberation Sans", sans-serif; fill: #777; }

.titlebar { height: 9px; flex: none; background: #fff; overflow: hidden; display: flex; align-items: flex-start; color: #8c8c8c; line-height: 16px; padding-right: 14px; }
.titlebar span { margin: -10px auto 0 10px; }
.logo { width: 8px; height: 5px; margin-left: 3px; }
.titlebar i { width: 8px; height: 1px; background: #999; margin-right: 38px; }
.titlebar b { width: 10px; height: 1px; border: solid #999; border-width: 0 1px; margin-left: 10px; }

.menubar { height: 25px; flex: none; display: flex; align-items: center; padding: 1px 3px 0 10px; gap: 12px; background: linear-gradient(90deg, #f0f0f0, #fcfcfc); }
.menubar .update { margin-left: auto; margin-right: -4px; color: #3296fa; }
.menubar button { width: 16px; height: 16px; margin-right: -12px; }
.menubar button + button { margin-left: 0; }
.menubar button:last-child { margin-right: 0; }
.menubar button svg { width: 10px; height: 10px; display: block; margin: 2px auto; }

.workspace { flex: 1; min-height: 0; display: flex; }
.panel-head { height: 25px; flex: none; display: flex; align-items: center; padding: 0 4px 0 3px; background: linear-gradient(90deg, #fdfdfd, #f3f3f3); }
.panel-head h2 { flex: 1; }
.grip { width: 3px; height: 19px; margin-right: 6px; background: repeating-linear-gradient(#bbb 0 3px, transparent 3px 5px); }
.panel-head button { width: 16px; height: 16px; margin-left: 3px; }
.panel-head svg { width: 16px; height: 16px; display: block; }

.left { width: 247px; flex: none; display: flex; flex-direction: column; padding-right: 4px; }
.left .panel-head { padding-right: 2px; }
.panel-body { flex: 1; min-height: 0; background: #d7e4f1; padding: 0 8px 0 10px; display: flex; flex-direction: column; overflow: hidden; }
.tools { padding-top: 10px; }
.tools h3 { line-height: 18px; padding-left: 3px; font-weight: 600; white-space: nowrap; }
.tools--wide { padding-top: 17px; }
.tools--wide h3 { padding-bottom: 8px; }
.tools:first-child { padding-top: 7px; }
.tools:first-child h3 { padding-bottom: 3px; }
.tool-grid { display: grid; grid-template-columns: repeat(6, 30px); grid-auto-rows: 28px; }
.tool-grid button { display: grid; place-items: center; }
.tool-grid svg { width: 20px; height: 20px; overflow: visible; }
.job-size { margin: auto 0 12px; font: bold 14px/20px "Liberation Sans", sans-serif; color: #a0a8b0; padding-left: 8px; }
.job-size p:first-child { margin-left: -10px; }
.job-size i { font-style: normal; font-weight: normal; }
.bottom-tabs { height: 26px; flex: none; display: flex; }
.bottom-tabs button { flex: none; width: 64px; height: 24px; position: relative; text-align: left; padding-left: 4px; }
.bottom-tabs button:last-child { width: 50px; }
.bottom-tabs svg { position: absolute; left: 0; top: 0; width: 72px; height: 24px; overflow: visible; }
.bottom-tabs span { position: relative; }

.center { flex: 1; min-width: 0; display: grid; grid-template: 30px 25px 1fr 16px / 25px 1fr; padding-right: 3px; }
.toolbar { grid-column: 1 / -1; display: flex; align-items: center; padding-left: 8px; background: linear-gradient(#fdfdfd, #ececec); border-bottom: 1px solid #a0a0a0; margin-left: 2px; }
.view-tab { position: relative; width: 66px; height: 21px; align-self: flex-end; }
.view-tab svg { position: absolute; left: 0; top: 0; width: 76px; height: 21px; overflow: visible; }
.view-tab span { position: relative; }
.view-tab--on { font-weight: 600; z-index: 1; padding-left: 5px; }
.view-tab + .view-tab { width: 60px; padding-right: 8px; margin-left: 2px; }
.sheet-pick { margin-left: 53px; height: 18px; padding-left: 6px; border-left: 1px solid #bbb; display: flex; align-items: center; gap: 4px; }
.sheet-pick svg { width: 15px; height: 15px; }
.caret { border: 3px solid transparent; border-top-color: #222; border-bottom: 0; }
.tb-group { display: flex; border-left: 1px solid #bcbcbc; margin-right: 7px; }
.sheet-pick + .tb-group { margin-left: auto; }
.tb-group:last-child { margin-right: 227px; }
.tb-group button { width: 27px; height: 22px; display: grid; place-items: center; }
.tb-group svg { width: 20px; height: 20px; }
.tb-group .on svg { background: #cfe6fa; outline: 1px solid #0078d7; }
.ruler-corner { border: 1px solid #888; margin-top: 1px; display: grid; place-items: center; }
.ruler-corner svg { width: 20px; height: 20px; }
.ruler-x { width: 100%; height: 24px; border: solid #999; border-width: 1px 0 1px 1px; margin-left: 1px; margin-top: 1px; }
.ruler-y { grid-row: 3 / 5; width: 24px; height: 100%; border: 1px solid #999; background: #f4f4f4; }
.ruler-x text, .ruler-y text { font-size: 11px; text-anchor: middle; fill: #222; }
.ruler-x path, .ruler-y path { stroke: #000; shape-rendering: crispEdges; }
.canvas { width: 100%; height: 100%; background: #dcdcdc; border: solid #000; border-width: 1px 0 0 1px; margin-left: 1px; margin-top: 1px; min-height: 0; }
.canvas path, .canvas rect { fill: none; shape-rendering: crispEdges; }
.canvas .red { stroke: #d09090; }
.canvas .thin { stroke: #a0a0a0; }
.canvas .thick { stroke: #9c9c9c; stroke-width: 2; }
.canvas .sheet { stroke: #a0a0a0; }
.canvas .ghost { stroke: #c6c6c6; }
.canvas .blank { fill: #fff; }
.canvas .edge { stroke: #000; }
.canvas .arrow { stroke: #000; shape-rendering: auto; }
.canvas .start { fill: #00c000; stroke: #000; }
.canvas .name { font: 300 13px "Lato", sans-serif; fill: #808080; text-anchor: middle; }
.canvas .digit { font: 100 64px "Lato", sans-serif; fill: #808080; text-anchor: middle; }
.canvas .page { font: 13px "Liberation Serif", serif; fill: #989898; text-anchor: middle; }
.scroll-x { border-left: 1px solid #000; border-top: 1px solid #fff; margin-left: 1px; display: flex; }
.scroll-x button { width: 16px; }
.scroll-x svg { width: 10px; height: 10px; }
.thumb { background: #cdcdcd; width: 52%; margin-left: calc(33% - 4px); }

.right { width: 303px; flex: none; display: flex; padding-left: 1px; background: #fbfbfb; gap: 2px; }
.right-main { width: 280px; display: flex; flex-direction: column; }
.right .panel-head { background: #dfe9f3; padding: 0 1px 0 5px; }
.right .panel-head h2 { padding-left: 1px; }
.setup-panel { background: #d7e4f1; border: solid #89a3c0; border-width: 0 1px 1px 0; height: 323px; padding: 13px 0 0 13px; }
.stock { display: flex; font: 11px/13px "DejaVu Sans Condensed", "DejaVu Sans", sans-serif; color: #606468; height: 75px; }
.stock h3 { color: #000; font-weight: bold; padding: 3px 0 0 5px; }
.material { width: 185px; display: grid; grid-template: 28px 32px 16px / 75px 1fr; border-right: 1px solid #888; }
.set-btn { margin-left: 6px; width: 58px; height: 22px; border: 2px solid #0078d7; background: #e1e1e1; color: #000; }
.stock-pic { grid-column: 2; grid-row: 1 / 3; width: 109px; height: 60px; overflow: visible; }
.stock-pic text { fill: #707478; }
.stock-pic .t-z { fill: #111; }
.material p { grid-column: 1 / -1; padding: 1px 0 0 5px; display: flex; gap: 6px; white-space: nowrap; }
.origin { padding: 2px 0 0 9px; }
.origin h4 { color: #111; padding-left: 3px; line-height: 14px; }
.origin svg { display: block; width: 48px; height: 28px; margin-bottom: 5px; }
.ops-title { font-weight: 600; padding: 10px 0 0 3px; line-height: 18px; }
.ops { display: grid; grid-template-columns: repeat(5, 35px); grid-auto-rows: 33px; padding-top: 1px; }
.ops button { display: grid; place-items: center; }
.ops svg { width: 24px; height: 24px; }
.list-panel { flex: 1; margin-top: 4px; background: #d7e4f1; border-right: 1px solid #89a3c0; padding: 3px 10px 0 10px; font: 13px/18px "Liberation Sans", sans-serif; }
.list-head { display: flex; align-items: center; gap: 2px; height: 31px; border-bottom: 2px solid #a0a0a0; padding-bottom: 3px; }
.list-head label { flex: 1; display: flex; align-items: center; gap: 8px; font-weight: bold; padding-left: 3px; }
.list-head button { width: 21px; height: 26px; background: #e1e1e1; border: 1px solid #adadad; display: grid; place-items: center; }
.list-head button:disabled { background: #ccc; }
.list-head svg { width: 16px; height: 20px; }
input[type="checkbox"] { appearance: none; margin: 0; width: 13px; height: 13px; background: #fff; border: 1px solid #222; position: relative; flex: none; }
input[type="checkbox"]:checked::after { content: ""; position: absolute; left: 4px; top: 1px; width: 3px; height: 6px; border: solid #333; border-width: 0 1px 1px 0; transform: rotate(45deg); }
.paths { padding: 2px 0 0 7px; }
.paths li { height: 18px; position: relative; padding-left: 12px; }
.paths li::before { content: ""; position: absolute; left: 0; top: -8px; width: 11px; height: 18px; border: dotted #777; border-width: 0 0 1px 1px; }
.paths li:first-child::before { top: 9px; height: 1px; border-left: 0; }
.paths label { display: flex; align-items: center; gap: 5px; }
.paths input[type="checkbox"] { border-color: #8e8f8f; background: #eef0f4; }
.paths input[type="checkbox"]:checked::after { left: 3px; border-color: #3c5aa8; border-width: 0 2px 2px 0; width: 5px; height: 8px; top: 0; }
.paths i { width: 10px; height: 14px; border: solid #111; border-width: 0 1px 1px; background: linear-gradient(90deg, #777, #f2f2f2 4px, #d8d8d8 5px, #777); }
.paths span { padding: 0 1px; line-height: 16px; }
.sel, .paths .sel { background: #0078d7; color: #fff; }
.paths .sel { -webkit-text-stroke: .4px #fff; }
.side-tab { writing-mode: vertical-rl; width: 20px; height: 75px; margin-top: 2px; border: 1px solid #aaa; border-right: 0; border-radius: 3px 0 0 3px; background: #fdfdfd; font: 11px/16px "DejaVu Sans", sans-serif; }

.status { height: 14px; flex: none; border-top: 1px solid #d0d0d0; overflow: hidden; display: flex; justify-content: space-between; line-height: 20px; }
.coords { width: 542px; }

.dialog { position: absolute; left: 169px; top: 122px; width: 658px; height: 572px; display: flex; flex-direction: column; border: 1px solid #5c6064; background: #f0f0f0; box-shadow: 0 4px 18px rgba(0, 0, 0, .35); font: 11px/16px "DejaVu Sans Condensed", "DejaVu Sans", sans-serif; }
.dialog h1 { height: 30px; line-height: 30px; padding-left: 8px; background: #fff; font-family: "Open Sans", sans-serif; font-size: 12px; }
.dialog h2, .dialog legend { font-weight: bold; }
.dlg-body { flex: 1; min-height: 0; display: flex; flex-direction: column; padding: 10px 10px 10px 12px; }
.dlg-cols { flex: 1; min-height: 0; display: flex; gap: 6px; }
.dlg-left { width: 233px; display: flex; flex-direction: column; }
.dlg-left h2 { padding-bottom: 5px; }
.tree { flex: 1; background: #fff; border: 1px solid #828790; padding-top: 2px; }
.tree li { height: 16px; display: flex; align-items: center; padding-left: 8px; position: relative; }
.tree li svg { width: 14px; height: 16px; flex: none; position: relative; }
.tree b { margin-left: 3px; padding: 0 2px; }
.exp { width: 9px; height: 9px; border: 1px solid #919191; background: #fff; font: 9px/7px "DejaVu Sans", sans-serif; color: #224; text-align: center; margin-right: 7px; z-index: 1; }
.tree li:not(.sub)::before { content: ""; position: absolute; left: 12px; top: -8px; width: 10px; height: 17px; border: dotted #888; border-width: 0 0 1px 1px; }
.tree li:not(.sub):first-child::before { top: 8px; height: 1px; border-left: 0; }
.tree li.sub { padding-left: 43px; }
.tree .sub svg { margin-right: 5px; }
.tree .sub::before { content: ""; position: absolute; left: 31px; top: -8px; width: 12px; height: 17px; border: dotted #888; border-width: 0 0 1px 1px; }
.dialog button { height: 22px; width: 74px; background: #e1e1e1; border: 1px solid #adadad; line-height: 18px; white-space: nowrap; }
.dialog .default { border: 2px solid #0078d7; }
.dlg-btns { display: grid; grid-template-columns: repeat(3, 74px); gap: 5px 4px; padding: 2px 0 0 1px; }
.dialog fieldset { flex: 1; min-width: 0; margin: 18px 0 30px; border: 1px solid #dcdcdc; padding: 2px 11px 5px 0; display: grid; grid-template: 48px 68px 1fr / 67px 1fr; column-gap: 8px; align-items: start; }
.dialog legend { margin-left: 6px; padding: 0 3px; line-height: 16px; }
.dialog label { text-align: right; padding-top: 3px; }
.dialog input, .dialog textarea { margin: 0; border: 1px solid #7a7a7a; background: #fff; font: inherit; padding: 1px 4px; border-radius: 0; outline: 0; }
.dialog input { height: 21px; margin-right: 11px; }
.dialog textarea { width: 228px; height: 68px; resize: none; overflow: hidden; font-family: "Liberation Sans", sans-serif; }
.dialog .apply { grid-column: 2; justify-self: end; align-self: end; }
.dlg-foot { display: flex; justify-content: flex-end; gap: 4px; margin-top: -13px; padding-right: 10px; }
.resize { position: absolute; right: 3px; bottom: 3px; width: 8px; height: 8px; }
```
FILE: app.js
```js
// Rulers: model units to pixels. One tick per 50 units, a tall one per 500.
const PX = 114.45 / 1000;
const rulerX = document.getElementById('rulerX');
const rulerY = document.getElementById('rulerY');

let ticks = '', labels = '';
for (let u = -5050; u <= 6650; u += 50) {
  const x = Math.round(579 + u * PX);
  if (x < 0) continue;
  ticks += `M${x}.5 ${u % 500 ? 16 : 13}V20`;
}
for (let u = -5000; u <= 6000; u += 1000)
  labels += `<text x="${Math.round(579 + u * PX)}" y="11">${u}</text>`;
rulerX.innerHTML = `<path d="${ticks}"/>${labels}`;

ticks = ''; labels = '';
for (let u = 150; u <= 8200; u += 50) {
  const y = Math.round(942 - u * PX);
  if (y < 2 || y > 908) continue;
  ticks += `M${u % 500 ? 17 : 14} ${y}.5H21`;
  if (u % 1000 === 0) labels += `<text transform="translate(12 ${y}) rotate(-90)">${u}</text>`;
}
rulerY.innerHTML = `<path d="${ticks}"/>${labels}`;

// Toolpaths. Coordinates are thirds of a pixel from each row's origin.
const rows = [
  {
    oy: 150,
    sheets: [[42, 49, '4', 250], [502, 49, '5', 711]],
    red: 'M190 195V265H358V270M116 335V505M43 482H82M116 577V746H43M595 239H625M717 338V596M356 880H374M576 880H594',
    thin: 'M42 193H190M82 335V480H43M43 332H118V505H43M43 575H118V748H43M189 268H374M374 193V886M374 193H410V886M410 262H446V886' +
      'M502 314H568M535 314V575M568 286H583V575M568 314V286M595 240V575M595 240H625M627 262H646M646 193V886M646 193H661M681 335H715M697 335V623M681 623H712M730 596V886',
    thick: 'M147 193V886M189 193V886M282 272V886M189 577H374M42 884H446M43 332H82M568 314V575M627 241V886M663 193V886M681 199V886M502 577H594V886M714 335V886M502 884H730',
    starts: [145,193,190,193,409,193,280,271,373,271,445,262,82,335,280,584,373,577,535,314,568,314,583,287,625,241,646,262,661,193,679,199,697,335,715,335,592,577,730,596,712,623],
    down: { 42:[262,462,863],147:[320,500,680,860],189:[338,518,647,827],118:[367,578],282:[337,520,654,834],374:[326,507,688,868],410:[397,577,757],502:[453,655,833],535:[453],568:[440],595:[378,558,738],627:[412,592,773,885],646:[350,533,712],663:[357,538,718,898],681:[762],697:[489],714:[748] },
    up: { 147:[291,471,651,831],189:[231,411,591,771],82:[358],282:[363,542,676,855],374:[363,543,665,845],410:[217,397,577,757],446:[328,508,689,870],535:[371,551],568:[371,551],583:[371,548],594:[665,845],627:[345,525,706],646:[295,476,655,835],663:[351,531,711],681:[353,533,712,893],697:[416,597],714:[411,594,680,858],730:[677,857] },
    left: [75,504,105,746], right: []
  },
  {
    oy: 450,
    sheets: [[42, 28, '1', 250], [502, 28, '2', 711], [963, 28, '3', 1171]],
    red: 'M43 31H169M317 45V97M344 99V151H233M352 173H457M882 216H914M1240 32H1324M1322 34V180M1255 182V218',
    thin: 'M169 34V175M169 43H316V97M205 43V97M169 97H343V148H233M233 97V175M43 175H457M814 175V46H880V218M502 175H814M963 46H1198V218M1157 46V218M1198 73H1240M1240 34V218M1240 34H1324V180M1349 865V172H1367V865',
    thick: 'M43 34H169M105 34V175M242 43V97M279 43V97M269 97V150M306 97V150M233 148H343M354 175H459V865M354 175V865M814 175V865M814 218H918V865M963 46V865M1032 46V218M1074 46V218M1115 46V218M963 218H1255M1282 34V180M1240 180H1349M1257 180V865',
    starts: [105,34,169,34,205,43,242,43,278,43,316,43,232,97,268,97,304,97,343,97,352,175,457,175,202,205,880,46,814,175,916,220,661,205,1031,46,1073,46,1115,46,1157,46,1198,46,1240,73,1282,32,1324,32,1255,220,1348,178,1366,172],
    down: { 42:[140,215,396,576,756],105:[138],354:[240,420,600,780],502:[215,396,576,756],813:[146,283,464,644,824],963:[144,274,455,634,815],1032:[175],1074:[175],1115:[175],1157:[175],1198:[201],1240:[162],1282:[162],1257:[258,438,618,798],1349:[326,506,686] },
    up: { 105:[92],169:[92],354:[205,386,567,747],458:[335,515,695,873],813:[206,386,567,747],880:[175],918:[290,470,651,831],1032:[175],1074:[122],1115:[122],1157:[120],1198:[120],1240:[98],1282:[55],1324:[55],1257:[303,485,665,845],1349:[302,482,662,842],1367:[344,524,704] },
    left: [180,175,645,175,1087,218], right: [202,175,112,865,291,865,573,865,753,865,1095,865,1350,865]
  }
];

const px = v => Math.floor(v / 3);
const scalePath = (d, oy) => d.replace(/([MVH])(\d+)(?: (\d+))?/g, (m, c, a, b) =>
  c === 'M' ? `M${840 + px(a)}.5 ${oy + px(b)}.5` : c === 'H' ? `H${840 + px(a)}.5` : `V${oy + px(a)}.5`);
const heads = { up: 'm-4 3l4-6l4 6', down: 'm-4-3l4 6l4-6', left: 'm3-4l-6 4l6 4', right: 'm-3-4l6 4l-6 4' };

let out = '<path class="ghost" d="M853.5 91V1000"/>';
for (const r of rows) {
  for (const [x, y, digit, cx] of r.sheets) {
    const X = 840 + px(x), Y = r.oy + px(y), mid = X + 70;
    out += `<rect class="sheet" x="${X}.5" y="${Y}.5" width="139" height="279"/>`;
    out += `<text class="name" x="${mid}" y="${Y + 38}">Cot vang 6098–17mm</text>`;
    out += `<text class="digit" x="${840 + px(cx)}" y="${Y + 163}">${digit}</text>`;
    out += `<text class="page" x="${X + 76}" y="${Y + 290}">Страница ${digit}</text>`;
  }
  for (const k of ['thin', 'thick', 'red']) out += `<path class="${k}" d="${scalePath(r[k], r.oy)}"/>`;
  let a = '';
  for (const k of ['up', 'down'])
    for (const x in r[k]) for (const y of r[k][x]) a += `M${840 + px(x)}.5 ${r.oy + px(y)}.5${heads[k]}`;
  for (const k of ['left', 'right'])
    for (let i = 0; i < r[k].length; i += 2) a += `M${840 + px(r[k][i])}.5 ${r.oy + px(r[k][i + 1])}.5${heads[k]}`;
  out += `<path class="arrow" d="${a}"/>`;
  for (let i = 0; i < r.starts.length; i += 2)
    out += `<rect class="start" x="${837 + px(r.starts[i])}.5" y="${r.oy - 3 + px(r.starts[i + 1])}.5" width="6" height="6"/>`;
}
out += '<rect class="blank" x="854" y="753" width="139" height="246"/><path class="edge" d="M854 752.5H993.5V1000"/><path class="sheet" d="M994.5 754V1000"/>';
out += '<path class="ghost" d="M1007.5 1032V752.5H1146.5V1032M1007.5 752.5L1146.5 1032M1146.5 752.5L1007.5 1032"/>';
document.getElementById('canvas').innerHTML = `<g transform="translate(-274 -91)">${out}</g>`;
```
